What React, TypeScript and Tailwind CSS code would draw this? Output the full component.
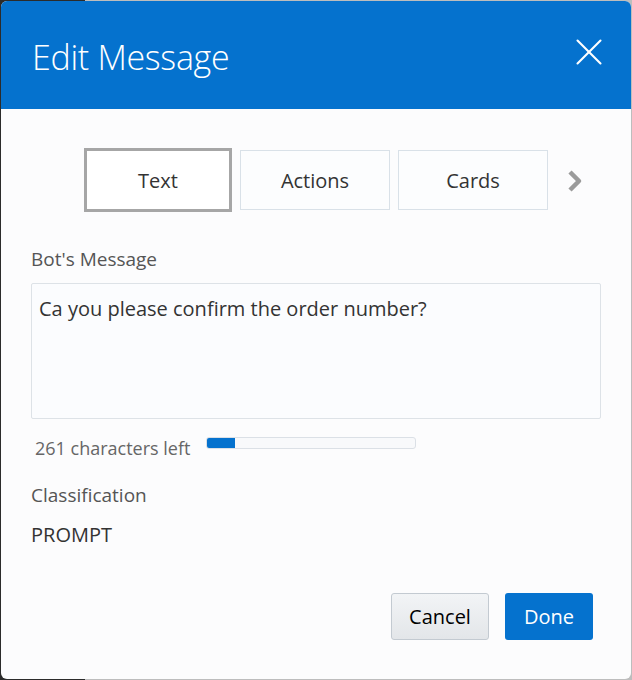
import { X } from 'lucide-react'

const tabs = [
  { label: 'Text', active: true },
  { label: 'Actions', active: false },
  { label: 'Cards', active: false },
]

function Tab({ label, active }: { label: string; active: boolean }) {
  if (active) {
    return (
      <div className="w-[148px] h-[64px] border-[3px] border-[#a6a6a6] flex items-center justify-center text-[#333] bg-white pt-[2px]">
        {label}
      </div>
    )
  }
  return (
    <div className="w-[150px] h-[60px] border border-[#d9e1e8] flex items-center justify-center text-[#333] bg-[#fcfdfe] pt-[2px]">
      {label}
    </div>
  )
}

export default function App() {
  return (
    <div
      className="w-[632px] h-[680px] p-[1px] bg-[linear-gradient(to_right,#2b2b2b_0,#2b2b2b_85px,#bdbdbd_85px)]"
      style={{ fontFamily: '"Open Sans", "Noto Sans", sans-serif' }}
    >
      <div className="h-full rounded-[6px] overflow-hidden bg-[#fcfcfd] flex flex-col">
        {/* Header */}
        <div className="h-[108px] shrink-0 bg-[#0572ce] flex items-start justify-between pl-[31px] pr-[19px]">
          <h1 className="mt-[34px] text-[34px] leading-[44px] font-light text-white tracking-[-0.3px]">Edit Message</h1>
          <X className="mt-[28px] w-[46px] h-[46px] text-white" strokeWidth={1.1} aria-hidden="true" />
        </div>

        {/* Body */}
        <div className="flex-1 px-[30px] text-[20px]">
          <div className="flex items-center gap-[8px] pl-[53px] mt-[39px]">
            {tabs.map((t) => (
              <Tab key={t.label} {...t} />
            ))}
            <svg className="ml-[11px] mt-[2px]" width="18" height="24" viewBox="0 0 18 24" fill="none" aria-hidden="true">
              <polyline points="3,3 12,12 3,21" stroke="#9b9b9b" strokeWidth="4.5" strokeLinejoin="round" />
            </svg>
          </div>

          <div className="mt-[34px] text-[19px] text-[#555] leading-[26px]">Bot's Message</div>
          <div className="mt-[11px] h-[136px] border border-[#dde2e7] rounded-[2px] bg-[#fbfcfe] px-[7px] pt-[11px] text-[#333] leading-[28px]">
            Ca you please confirm the order number?
          </div>

          <div className="flex items-center mt-[17px] pl-[4px]">
            <span className="text-[18px] text-[#666] leading-[24px]">261 characters left</span>
            <div className="ml-[16px] w-[210px] h-[12px] border border-[#dbe0e6] rounded-[3px] bg-[#f8f9fb] overflow-hidden -mt-[10px]">
              <div className="h-full w-[28px] bg-[#0572ce]" />
            </div>
          </div>

          <div className="mt-[22px] text-[19px] text-[#555] leading-[26px]">Classification</div>
          <div className="mt-[14px] text-[#333] leading-[26px]">PROMPT</div>

          <div className="flex justify-end gap-[16px] mt-[45px] pr-[8px]">
            <button className="w-[98px] h-[47px] rounded-[3px] border border-[#c3cad1] bg-linear-to-b from-[#f2f4f6] to-[#e3e6e9] text-black">
              Cancel
            </button>
            <button className="w-[88px] h-[47px] rounded-[3px] bg-[#0572ce] text-white">Done</button>
          </div>
        </div>
      </div>
    </div>
  )
}
